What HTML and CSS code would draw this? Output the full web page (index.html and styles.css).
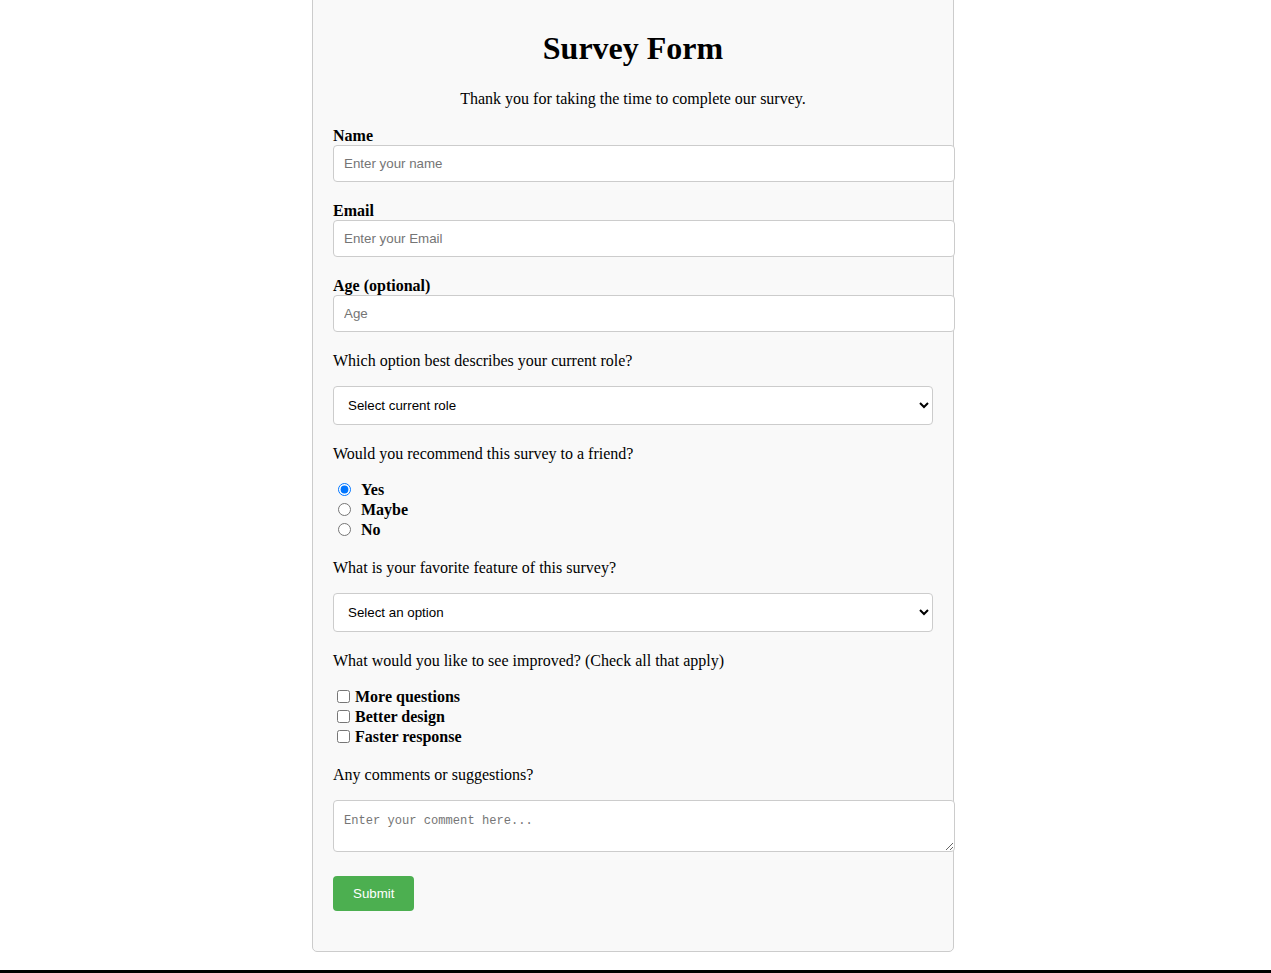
FILE: index.html
```html
<!DOCTYPE html>
<html lang="en">
<head>
<meta charset="utf-8">
<title>Survey Form</title>
<link rel="stylesheet" href="styles.css">
</head>
<body>
<div class="container">
  <h1 class="title">Survey Form</h1>
  <p class="desc">Thank you for taking the time to complete our survey.</p>
  <form class="form">
    <div class="group">
      <label class="label" for="name">Name</label>
      <input class="field" id="name" type="text" placeholder="Enter your name">
    </div>
    <div class="group">
      <label class="label" for="email">Email</label>
      <input class="field" id="email" type="email" placeholder="Enter your Email">
    </div>
    <div class="group">
      <label class="label" for="age">Age (optional)</label>
      <input class="field" id="age" type="number" placeholder="Age">
    </div>
    <div class="group">
      <p class="question">Which option best describes your current role?</p>
      <select class="select">
        <option>Select current role</option>
        <option>Student</option>
        <option>Full Time Job</option>
        <option>Other</option>
      </select>
    </div>
    <div class="group">
      <p class="question">Would you recommend this survey to a friend?</p>
      <label class="choice"><input class="radio" type="radio" name="rec" checked>Yes</label>
      <label class="choice"><input class="radio" type="radio" name="rec">Maybe</label>
      <label class="choice"><input class="radio" type="radio" name="rec">No</label>
    </div>
    <div class="group">
      <p class="question">What is your favorite feature of this survey?</p>
      <select class="select">
        <option>Select an option</option>
        <option>Design</option>
        <option>Questions</option>
      </select>
    </div>
    <div class="group">
      <p class="question">What would you like to see improved? (Check all that apply)</p>
      <label class="choice"><input class="check" type="checkbox">More questions</label>
      <label class="choice"><input class="check" type="checkbox">Better design</label>
      <label class="choice"><input class="check" type="checkbox">Faster response</label>
    </div>
    <div class="group group-comment">
      <p class="question">Any comments or suggestions?</p>
      <textarea class="comment" placeholder="Enter your comment here..."></textarea>
    </div>
    <div class="group">
      <button class="submit" type="submit">Submit</button>
    </div>
  </form>
</div>
<div class="bottom-line"></div>
</body>
</html>
```
FILE: styles.css
```css
html, body {
  margin: 0;
  padding: 0;
}
body {
  padding-right: 5px;
  font-family: "Liberation Serif", "Times New Roman", serif;
  font-size: 16px;
  color: #000;
  background: #fff;
}
.container {
  width: 600px;
  margin: -12px auto 0;
  padding: 20px;
  background: #f9f9f9;
  border: 1px solid #ccc;
  border-radius: 5px;
}
.title {
  font-size: 32px;
  font-weight: bold;
  text-align: center;
  margin: 21px 0 23px;
}
.desc {
  text-align: center;
  margin: 0 0 19px;
}
.form {
  margin: 0;
}
.group {
  margin-bottom: 20px;
}
.group-comment {
  padding-bottom: 4px;
}
.label {
  display: block;
  font-weight: bold;
}
.field {
  width: 100%;
  padding: 10px;
  border: 1px solid #ccc;
  border-radius: 4px;
  font-family: "Liberation Sans", Arial, sans-serif;
  font-size: 13.333px;
  background: #fff;
  display: block;
  line-height: 15px;
}
.field::placeholder,
.comment::placeholder {
  color: #757575;
}
.question {
  margin: 0 0 16px;
}
.select {
  display: block;
  width: 600px;
  height: 39px;
  padding: 0 10px;
  border: 1px solid #ccc;
  border-radius: 4px;
  background: #fff;
  font-family: "Liberation Sans", Arial, sans-serif;
  font-size: 13.333px;
  color: #000;
}
.choice {
  display: block;
  height: 20px;
  line-height: 22px;
  font-weight: bold;
}
.radio {
  width: 13px;
  height: 13px;
  margin: 0 10px 0 5px;
  vertical-align: -1px;
}
.check {
  width: 13px;
  height: 13px;
  margin: 0 5px 0 4px;
  vertical-align: -1px;
}
.comment {
  display: block;
  width: 100%;
  box-sizing: content-box;
  height: 30px;
  padding: 13px 10px 7px;
  border: 1px solid #ccc;
  border-radius: 4px;
  background: #fff;
  font-family: "Liberation Mono", "Courier New", monospace;
  font-size: 12.1px;
}
.submit {
  display: block;
  padding: 10px 20px;
  border: none;
  border-radius: 4px;
  background: #4caf50;
  color: #fff;
  font-family: "Liberation Sans", Arial, sans-serif;
  font-size: 13.333px;
  line-height: 15px;
  cursor: pointer;
}
.bottom-line {
  height: 3px;
  background: #000;
  margin-top: 18px;
  margin-right: -5px;
}
```
